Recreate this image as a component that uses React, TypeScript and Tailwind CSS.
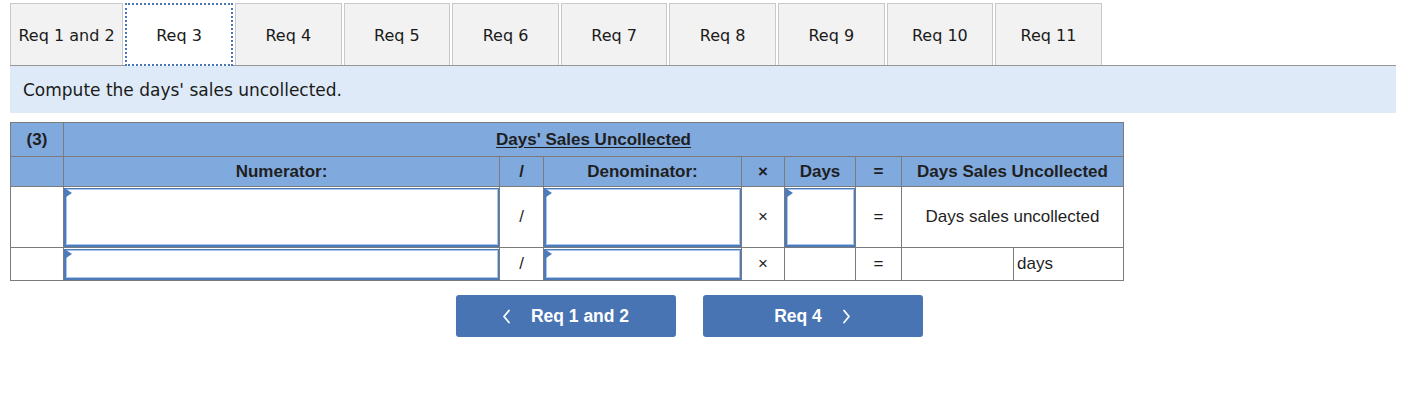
import type { ReactNode } from "react";

const tabs = ["Req 1 and 2", "Req 3", "Req 4", "Req 5", "Req 6", "Req 7", "Req 8", "Req 9", "Req 10", "Req 11"];
const ACTIVE = 1;

/* Text entry box with the little blue flag in its top-left corner */
function Entry({ tall }: { tall?: boolean }) {
  return (
    <div
      className={`relative w-full border border-b-2 border-l-2 border-[#4c7abb] bg-white shadow-[inset_0_0_0_1px_#abc6ec] ${
        tall ? "h-[59px]" : "h-[31px]"
      }`}
    >
      <span className="absolute left-0 top-0 h-0 w-0 border-y-[4px] border-l-[6px] border-y-transparent border-l-[#4c7abb]" />
    </div>
  );
}

function Th({ children, className = "", colSpan }: { children?: ReactNode; className?: string; colSpan?: number }) {
  return (
    <th
      colSpan={colSpan}
      className={`border border-[#7b7b7b] bg-[#80a9de] p-0 text-center text-[17px] font-bold text-[#1f1f1f] ${className}`}
    >
      {children}
    </th>
  );
}

function Td({ children, className = "", colSpan }: { children?: ReactNode; className?: string; colSpan?: number }) {
  return (
    <td colSpan={colSpan} className={`border border-[#7b7b7b] p-0 text-center text-[17px] text-[#1f1f1f] ${className}`}>
      {children}
    </td>
  );
}

function Chevron({ dir }: { dir: "left" | "right" }) {
  return (
    <svg width="9" height="15" viewBox="0 0 9 15" fill="none">
      <path
        d={dir === "left" ? "M7 1.5 L2 7.5 L7 13.5" : "M2 1.5 L7 7.5 L2 13.5"}
        stroke="white"
        strokeWidth="1.8"
        strokeLinecap="round"
        strokeLinejoin="round"
      />
    </svg>
  );
}

export default function App() {
  return (
    <div className="h-[404px] w-[1420px] bg-white font-['Liberation_Sans',Arial,sans-serif]">
      {/* Tabs */}
      <div className="flex gap-[2px] pl-[10px] pt-[3px] font-['DejaVu_Sans',Verdana,sans-serif] text-[16px] text-[#1a1a1a]">
        {tabs.map((t, i) =>
          i === ACTIVE ? (
            <div
              key={t}
              className="relative z-10 -mb-px flex h-[63px] w-[108px] items-center justify-center border-2 border-dotted border-[#4a76b8] bg-white pt-[3px]"
            >
              {t}
            </div>
          ) : (
            <div
              key={t}
              className={`flex h-[62px] items-center justify-center border border-b-0 border-[#c9c9c9] bg-[#f2f2f2] pt-[3px] ${
                i === 0 ? "w-[113px]" : "w-[106.6px]"
              }`}
            >
              {t}
            </div>
          )
        )}
      </div>

      {/* Instruction panel */}
      <div className="mx-[10px] flex h-[48px] w-[1386px] items-center border-t border-[#969696] bg-[#deeaf7] pl-[13px] pt-[2px] font-['DejaVu_Sans',Verdana,sans-serif] text-[17px] text-[#1a1a1a]">
        Compute the days' sales uncollected.
      </div>

      {/* Table */}
      <table className="ml-[10px] mt-[9px] w-[1113px] table-fixed border-collapse">
        <colgroup>
          <col className="w-[53px]" />
          <col className="w-[436px]" />
          <col className="w-[44px]" />
          <col className="w-[198px]" />
          <col className="w-[43px]" />
          <col className="w-[71px]" />
          <col className="w-[46px]" />
          <col className="w-[112px]" />
          <col className="w-[110px]" />
        </colgroup>
        <thead>
          <tr className="h-[34px]">
            <Th>(3)</Th>
            <Th colSpan={8}>
              <span className="underline underline-offset-2">Days' Sales Uncollected</span>
            </Th>
          </tr>
          <tr className="h-[30px]">
            <Th />
            <Th>Numerator:</Th>
            <Th>/</Th>
            <Th>Denominator:</Th>
            <Th>×</Th>
            <Th>Days</Th>
            <Th>=</Th>
            <Th colSpan={2}>Days Sales Uncollected</Th>
          </tr>
        </thead>
        <tbody>
          <tr className="h-[61px]">
            <Td />
            <Td>
              <Entry tall />
            </Td>
            <Td>/</Td>
            <Td>
              <Entry tall />
            </Td>
            <Td className="text-[15px]">×</Td>
            <Td>
              <Entry tall />
            </Td>
            <Td>=</Td>
            <Td colSpan={2}>Days sales uncollected</Td>
          </tr>
          <tr className="h-[33px]">
            <Td />
            <Td>
              <Entry />
            </Td>
            <Td>/</Td>
            <Td>
              <Entry />
            </Td>
            <Td className="text-[15px]">×</Td>
            <Td />
            <Td>=</Td>
            <Td />
            <Td className="pl-[3px] text-left">days</Td>
          </tr>
        </tbody>
      </table>

      {/* Navigation buttons */}
      <div className="ml-[9px] mt-[14px] flex w-[1360px] justify-center gap-[27px]">
        <button className="flex h-[42px] w-[220px] items-center justify-center gap-[20px] rounded-[3px] bg-[#4874b3] text-[17.5px] font-bold text-white">
          <Chevron dir="left" />
          Req 1 and 2
        </button>
        <button className="flex h-[42px] w-[220px] items-center justify-center gap-[20px] rounded-[3px] bg-[#4874b3] text-[17.5px] font-bold text-white">
          Req 4
          <Chevron dir="right" />
        </button>
      </div>
    </div>
  );
}
